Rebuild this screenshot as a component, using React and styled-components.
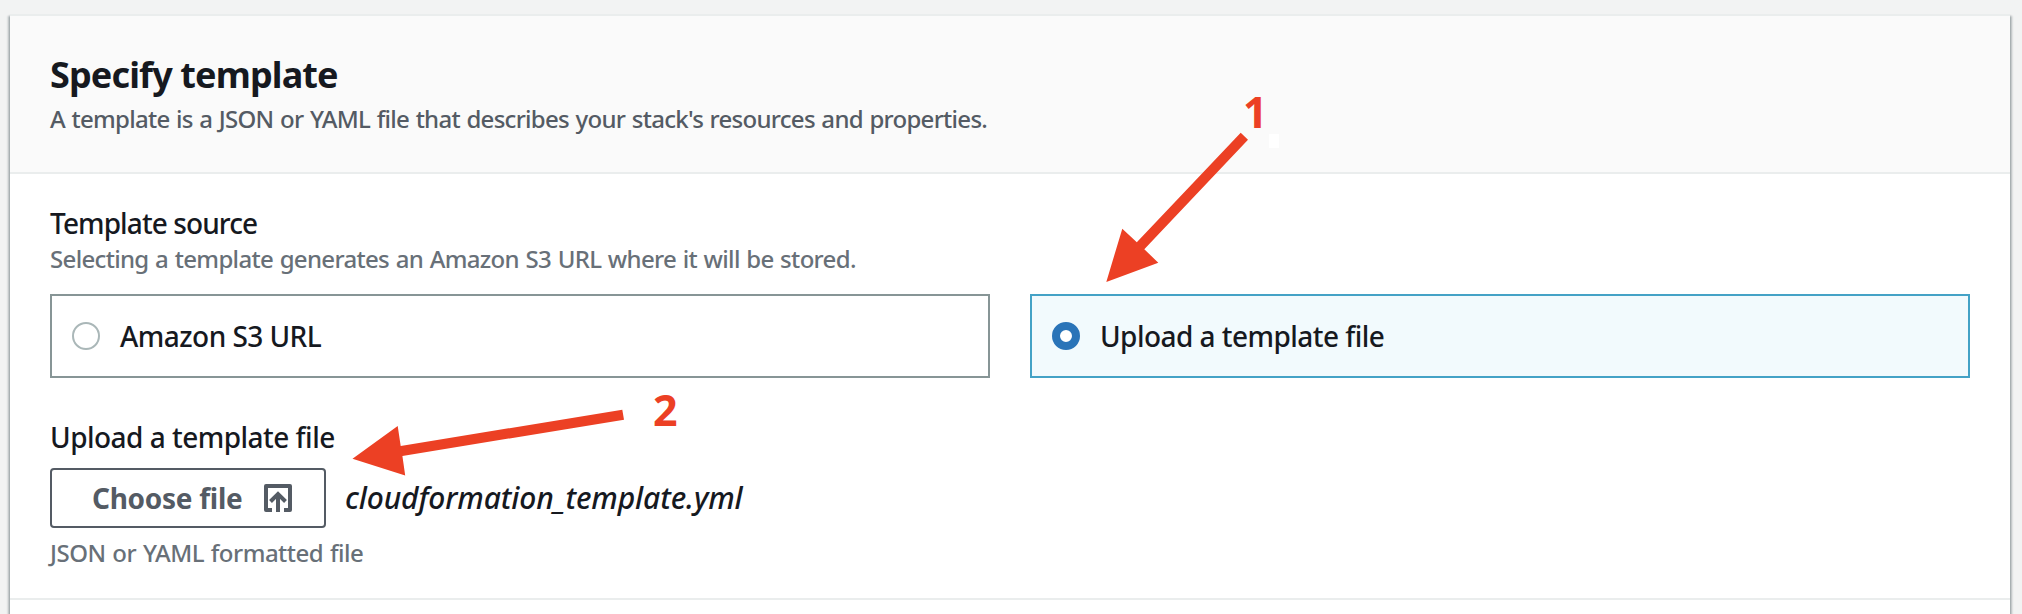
import React from 'react';
import styled, { createGlobalStyle } from 'styled-components';

const GlobalStyle = createGlobalStyle`
  * { box-sizing: border-box; }
  body {
    margin: 0;
    background: #f2f3f3;
    color: #16191f;
    font-family: "Noto Sans", "Open Sans", sans-serif;
    overflow: hidden;
  }
`;

const Page = styled.main`
  position: relative;
  height: 614px;
  padding: 14px 12px 0 10px;
  overflow: hidden;
`;

const Panel = styled.section`
  height: 640px;
  background: #fff;
  border-top: 2px solid #eaeded;
  box-shadow:
    0 2px 2px 0 rgba(0, 28, 36, 0.3),
    2px 2px 2px 0 rgba(0, 28, 36, 0.25),
    -2px 2px 2px 0 rgba(0, 28, 36, 0.25);
`;

const PanelHeader = styled.header`
  height: 158px;
  padding: 37px 40px 0;
  background: #fafafa;
  border-bottom: 2px solid #eaeded;
`;

const Title = styled.h2`
  margin: 0;
  font-size: 36px;
  line-height: 44px;
  font-weight: 700;
  letter-spacing: -0.87px;
`;

const Description = styled.p`
  margin: 6px 0 0;
  font-size: 24px;
  line-height: 32px;
  font-weight: 500;
  letter-spacing: -0.72px;
  word-spacing: 1px;
  color: #545b64;
`;

const PanelBody = styled.div`
  height: 426px;
  padding: 31px 40px 0;
  border-bottom: 2px solid #eaeded;
`;

const Field = styled.div`
  & + & { margin-top: 41px; }
`;

const FieldLabel = styled.div`
  font-size: 28px;
  line-height: 36px;
  font-weight: 500;
  letter-spacing: ${(p) => p.$tracking};
`;

const Hint = styled.div`
  margin-top: ${(p) => p.$gap};
  font-size: 24px;
  line-height: 28px;
  font-weight: 500;
  letter-spacing: ${(p) => p.$tracking};
  word-spacing: 1px;
  color: #687078;
`;

const Tiles = styled.div`
  display: grid;
  grid-template-columns: 1fr 1fr;
  gap: 40px;
  margin-top: 21px;
`;

const Tile = styled.label`
  display: flex;
  align-items: center;
  gap: 20px;
  height: 84px;
  padding: 0 20px 1px;
  border: 2px solid ${(p) => (p.$selected ? '#44a2c6' : '#879596')};
  background: ${(p) => (p.$selected ? '#f2fafd' : '#fff')};
  font-size: 28px;
  line-height: 36px;
  font-weight: 500;
  letter-spacing: -0.54px;
`;

const Radio = styled.span`
  width: 28px;
  height: 28px;
  margin-top: 1px;
  border-radius: 50%;
  background: #fff;
  border: ${(p) => (p.$selected ? '8px solid #2a74b8' : '2px solid #aab7b8')};
`;

const UploadRow = styled.div`
  display: flex;
  align-items: center;
  gap: 19px;
  margin-top: 13px;
`;

const UploadButton = styled.button`
  display: flex;
  align-items: center;
  justify-content: space-between;
  width: 276px;
  height: 60px;
  padding: 0 32px 0 40px;
  border: 2px solid #545b64;
  border-radius: 4px;
  background: #fff;
  color: #545b64;
  font-family: inherit;
  font-size: 28px;
  line-height: 36px;
  font-weight: 700;
  letter-spacing: -0.28px;
`;

const FileName = styled.span`
  font-size: 30px;
  line-height: 40px;
  font-weight: 500;
  font-style: italic;
  letter-spacing: -0.13px;
`;

const Annotations = styled.svg`
  position: absolute;
  inset: 0;
  width: 2022px;
  height: 614px;
  fill: #ec4024;
  pointer-events: none;
`;

const Step = styled.span`
  position: absolute;
  left: ${(p) => p.$x}px;
  top: ${(p) => p.$y}px;
  color: #ec4024;
  font-size: 43px;
  line-height: 44px;
  font-weight: 700;
`;

const Caret = styled.span`
  position: absolute;
  left: 1269px;
  top: 134px;
  width: 10px;
  height: 14px;
  background: #fff;
`;

function UploadIcon() {
  return (
    <svg width="28" height="28" viewBox="0 0 28 28" fill="none" stroke="currentColor" strokeWidth="4">
      <path d="M8 26H2V2h24v24h-6" strokeLinejoin="round" />
      <path d="M14 28V10M6.5 17.5 14 10l7.5 7.5" />
    </svg>
  );
}

export default function App() {
  return (
    <>
      <GlobalStyle />
      <Page>
        <Panel>
          <PanelHeader>
            <Title>Specify template</Title>
            <Description>
              A template is a JSON or YAML file that describes your stack's resources and properties.
            </Description>
          </PanelHeader>
          <PanelBody>
            <Field>
              <FieldLabel $tracking="-0.9px">Template source</FieldLabel>
              <Hint $gap="4px" $tracking="-0.675px">
                Selecting a template generates an Amazon S3 URL where it will be stored.
              </Hint>
              <Tiles>
                <Tile><Radio />Amazon S3 URL</Tile>
                <Tile $selected><Radio $selected />Upload a template file</Tile>
              </Tiles>
            </Field>
            <Field>
              <FieldLabel $tracking="-0.52px">Upload a template file</FieldLabel>
              <UploadRow>
                <UploadButton type="button">
                  Choose file
                  <UploadIcon />
                </UploadButton>
                <FileName>cloudformation_template.yml</FileName>
              </UploadRow>
              <Hint $gap="11px" $tracking="-0.5px">JSON or YAML formatted file</Hint>
            </Field>
          </PanelBody>
        </Panel>
        <Annotations viewBox="0 0 2022 614">
          <polygon points="1106.3,281.9 1122.3,228.7 1136.8,242.2 1240.7,132.7 1248,139.7 1144.3,249.3 1158.3,262.7" />
          <polygon points="352.5,458.7 397.7,426 400.7,446 622.3,409.7 624,419.7 402.4,456 405.2,475.4" />
        </Annotations>
        <Step $x={1243} $y={90}>1</Step>
        <Step $x={653} $y={388}>2</Step>
        <Caret />
      </Page>
    </>
  );
}
